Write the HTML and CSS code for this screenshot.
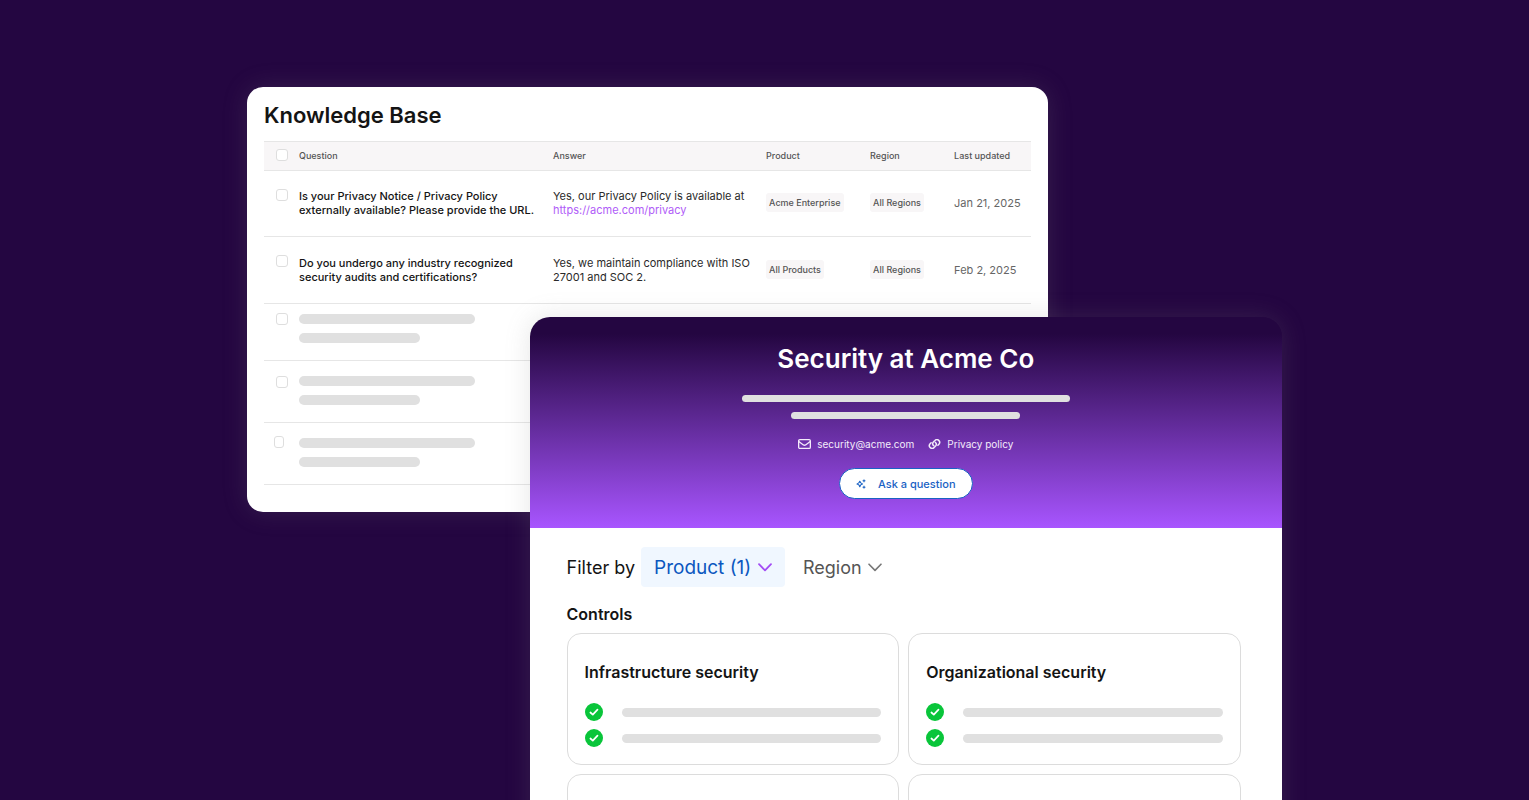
FILE: index.html
```html
<!DOCTYPE html>
<html lang="en">
<head>
<meta charset="utf-8">
<meta name="viewport" content="width=device-width, initial-scale=1">
<title>Knowledge Base and Security at Acme Co</title>
<link rel="stylesheet" href="styles.css">
</head>
<body>
<main class="stage">
  <section class="panel kb">
    <h1 class="kb-title">Knowledge Base</h1>
    <table class="kb-table">
      <colgroup>
        <col class="col-check"><col class="col-question"><col class="col-answer"><col class="col-product"><col class="col-region"><col class="col-updated">
      </colgroup>
      <thead>
        <tr>
          <th><input class="check" type="checkbox" aria-label="Select all"></th>
          <th>Question</th><th>Answer</th><th>Product</th><th>Region</th><th>Last updated</th>
        </tr>
      </thead>
      <tbody>
        <tr class="entry entry-first">
          <td class="pick"><input class="check" type="checkbox" aria-label="Select privacy question"></td>
          <td class="question">Is your Privacy Notice / Privacy Policy<br>externally available? Please provide the URL.</td>
          <td class="answer">Yes, our Privacy Policy is available at <a href="#privacy">https://acme.com/privacy</a></td>
          <td class="tag-cell"><span class="tag">Acme Enterprise</span></td>
          <td class="tag-cell"><span class="tag">All Regions</span></td>
          <td class="date">Jan 21, 2025</td>
        </tr>
        <tr class="entry">
          <td class="pick"><input class="check" type="checkbox" aria-label="Select audits question"></td>
          <td class="question">Do you undergo any industry recognized<br>security audits and certifications?</td>
          <td class="answer">Yes, we maintain compliance with ISO 27001 and SOC 2.</td>
          <td class="tag-cell"><span class="tag">All Products</span></td>
          <td class="tag-cell"><span class="tag">All Regions</span></td>
          <td class="date">Feb 2, 2025</td>
        </tr>
        <tr class="blank blank-first">
          <td><input class="check" type="checkbox" aria-label="Select row 3"></td>
          <td colspan="5"><div class="bar bar-long"></div><div class="bar bar-short"></div></td>
        </tr>
        <tr class="blank">
          <td><input class="check" type="checkbox" aria-label="Select row 4"></td>
          <td colspan="5"><div class="bar bar-long"></div><div class="bar bar-short"></div></td>
        </tr>
        <tr class="blank blank-last">
          <td><input class="check check-narrow" type="checkbox" aria-label="Select row 5"></td>
          <td colspan="5"><div class="bar bar-long"></div><div class="bar bar-short"></div></td>
        </tr>
      </tbody>
    </table>
  </section>

  <section class="panel portal">
    <header class="hero">
      <h2 class="hero-title">Security at Acme Co</h2>
      <div class="hero-bar hero-bar-long"></div>
      <div class="hero-bar hero-bar-short"></div>
      <nav class="hero-links">
        <a href="#mail">
          <svg width="13" height="10" viewBox="0 0 13 10" fill="none" stroke="currentColor" stroke-width="1.3" stroke-linejoin="round"><rect x=".65" y=".65" width="11.7" height="8.7" rx="1.2"/><path d="M.8 2.5 5.4 5.9Q6.5 6.6 7.6 5.9L12.2 2.5"/></svg>
          security@acme.com
        </a>
        <a href="#policy">
          <svg width="13" height="10" viewBox="0 0 13 10" fill="none" stroke="currentColor" stroke-width="1.5" stroke-linecap="round"><path d="M5.7 6.7A2.3 2.3 0 0 1 5.2 3.3L6.9 1.6A2.6 2.6 0 0 1 10.9 5.2L9.9 6.2"/><path d="M7.3 3.3A2.3 2.3 0 0 1 7.8 6.7L6.1 8.4A2.6 2.6 0 0 1 2.1 4.8L3.1 3.8"/></svg>
          Privacy policy
        </a>
      </nav>
      <button class="ask" type="button">
        <svg width="10" height="10" viewBox="0 0 10 10" fill="none" stroke="currentColor" stroke-width="1.1"><path d="M3.8 2.2Q4.2 4.6 6.6 5 4.2 5.4 3.8 7.8 3.4 5.4 1 5 3.4 4.6 3.8 2.2Z" stroke-linejoin="round"/><path d="M8 .4v2.8M6.6 1.8h2.8M8 6.8v2.8M6.6 8.2h2.8"/></svg>
        Ask a question
      </button>
    </header>
    <div class="content">
      <div class="filters">
        <span class="filter-label">Filter by</span>
        <div class="filter filter-active">
          <select aria-label="Product"><option>Product (1)</option></select>
          <svg class="chevron" width="14" height="9" viewBox="0 0 14 9" fill="none" stroke="currentColor" stroke-width="1.8" stroke-linecap="round" stroke-linejoin="round"><path d="M1 1.2 7 7.4 13 1.2"/></svg>
        </div>
        <div class="filter">
          <select aria-label="Region"><option>Region</option></select>
          <svg class="chevron" width="14" height="9" viewBox="0 0 14 9" fill="none" stroke="currentColor" stroke-width="1.6" stroke-linecap="round" stroke-linejoin="round"><path d="M1 1.2 7 7.4 13 1.2"/></svg>
        </div>
      </div>
      <h3 class="controls-title">Controls</h3>
      <div class="cards">
        <article class="card">
          <h4>Infrastructure security</h4>
          <ul>
            <li><svg class="tick" viewBox="0 0 18 18"><circle cx="9" cy="9" r="9"/><path d="M5.4 9.5 7.8 11.7 12.5 6.7"/></svg><span class="line"></span></li>
            <li><svg class="tick" viewBox="0 0 18 18"><circle cx="9" cy="9" r="9"/><path d="M5.4 9.5 7.8 11.7 12.5 6.7"/></svg><span class="line"></span></li>
          </ul>
        </article>
        <article class="card">
          <h4>Organizational security</h4>
          <ul>
            <li><svg class="tick" viewBox="0 0 18 18"><circle cx="9" cy="9" r="9"/><path d="M5.4 9.5 7.8 11.7 12.5 6.7"/></svg><span class="line"></span></li>
            <li><svg class="tick" viewBox="0 0 18 18"><circle cx="9" cy="9" r="9"/><path d="M5.4 9.5 7.8 11.7 12.5 6.7"/></svg><span class="line"></span></li>
          </ul>
        </article>
        <article class="card card-empty"></article>
        <article class="card card-empty"></article>
      </div>
    </div>
  </section>
</main>
</body>
</html>
```
FILE: styles.css
```css
* { box-sizing: border-box; }

body {
  margin: 0;
  background: #240641;
  color: #141414;
  font-family: Inter, "Liberation Sans", sans-serif;
}

h1, h2, h3, h4, ul { margin: 0; padding: 0; }

/* Two overlapping windows share one grid cell. */
.stage {
  display: grid;
  grid-template-columns: minmax(0, 1035px);
  justify-content: center;
  align-items: start;
  height: 100vh;
  padding-top: 87px;
  overflow: hidden;
}

.panel {
  grid-area: 1 / 1;
  box-shadow: 0 0 26px rgba(128, 128, 128, 0.2);
}

.kb {
  width: 77.4%;
  padding: 14px 17px 27px;
  background: #fff;
  border-radius: 16px;
}

.kb-title {
  margin-bottom: 12px;
  font-size: 22px;
  font-weight: 600;
  line-height: 28px;
}

.kb-table {
  width: 100%;
  table-layout: fixed;
  border-collapse: collapse;
}

.col-check { width: 35px; }
.col-question { width: 254px; }
.col-product { width: 104px; }
.col-region { width: 84px; }
.col-updated { width: 77px; }

.kb-table th,
.kb-table td {
  padding: 0;
  text-align: left;
  border-bottom: 1px solid #e6e6e6;
}

.kb-table th {
  height: 29px;
  padding-bottom: 2px;
  background: #f8f6f7;
  border-top: 1px solid #e6e6e6;
  color: #555;
  font-size: 9px;
  font-weight: 500;
  white-space: nowrap;
}

.check {
  appearance: none;
  display: block;
  width: 12px;
  height: 12px;
  margin: 0 0 0 12px;
  background: #fff;
  border: 1px solid #dedede;
  border-radius: 3px;
}

.check-narrow { width: 10px; margin-left: 10px; }

.entry td { height: 67px; }
.entry-first td { height: 66px; padding-bottom: 2px; }
.entry .pick { padding-top: 18px; vertical-align: top; }
.entry .tag-cell { padding-bottom: 4px; }

.question {
  font-size: 11px;
  font-weight: 500;
  line-height: 14px;
  white-space: nowrap;
}

.kb-table .answer {
  padding-right: 10px;
  color: #2a2a2a;
  font-size: 11px;
  line-height: 14px;
}

.answer a { color: #b05cf8; text-decoration: none; }

.tag {
  display: inline-block;
  padding: 0 3px;
  background: #f8f6f7;
  border-radius: 3px;
  color: #555;
  font-size: 9px;
  font-weight: 500;
  line-height: 19px;
  vertical-align: middle;
  white-space: nowrap;
}

.date { color: #666; font-size: 11px; white-space: nowrap; }

.blank td { height: 62px; padding-top: 15px; vertical-align: top; }
.blank-first td { height: 57px; padding-top: 10px; }
.blank-first td:first-child { padding-top: 9px; }
.blank-last td:first-child { padding-top: 13px; }

.bar { height: 10px; background: #e0e0e0; border-radius: 5px; }
.bar-long { width: 176px; margin-bottom: 9px; }
.bar-short { width: 121px; }

.portal {
  justify-self: end;
  width: 72.7%;
  margin-top: 230px;
  border-radius: 20px 20px 0 0;
}

.hero {
  display: flex;
  flex-direction: column;
  align-items: center;
  padding: 24px 20px 29px;
  border-radius: 20px 20px 0 0;
  background: linear-gradient(#240641 8%, #a855ff);
  color: #fff;
}

.hero-title {
  margin-bottom: 18px;
  font-size: 26px;
  font-weight: 600;
  line-height: 36px;
}

.hero-bar { height: 7px; margin-bottom: 10px; background: #e0e0e0; border-radius: 4px; }
.hero-bar-long { width: 328px; }
.hero-bar-short { width: 229px; margin-bottom: 17px; }

.hero-links { display: flex; gap: 14px; margin-bottom: 16px; }

.hero-links a {
  display: flex;
  align-items: center;
  gap: 6px;
  color: #f4ecfb;
  font-size: 10px;
  line-height: 16px;
  text-decoration: none;
}

.ask {
  display: flex;
  align-items: center;
  gap: 12px;
  height: 31px;
  padding: 0 16px;
  background: #fff;
  border: 1px solid #1a62c4;
  border-radius: 16px;
  color: #1a62c4;
  font: 500 11px Inter, sans-serif;
}

.content { padding: 19px 41px 0 37px; background: #fff; }

.filters { display: flex; align-items: center; gap: 5px; }
.filter-label { margin-right: 1px; font-size: 18px; }

.filter { position: relative; color: #777; }

.filter select {
  appearance: none;
  height: 40px;
  padding: 0 33px 0 13px;
  background: transparent;
  border: 0;
  border-radius: 4px;
  color: #555;
  font: 400 18px Inter, sans-serif;
}

.filter-active { color: #a34df5; }
.filter-active select { background: #f0f7ff; color: #0b57c0; font-size: 19px; }

.chevron { position: absolute; top: 16px; right: 13px; pointer-events: none; }

.controls-title { margin: 17px 0 9px; font-size: 16px; font-weight: 600; line-height: 20px; }

.cards { display: grid; grid-template-columns: 1fr 1fr; gap: 9px; }

.card {
  padding: 28px 17px 17px;
  border: 1px solid #dcdcdc;
  border-radius: 14px;
}

.card-empty { height: 131px; }

.card h4 { margin-bottom: 21px; font-size: 16px; font-weight: 600; line-height: 20px; }

.card ul { display: grid; gap: 8px; list-style: none; }
.card li { display: flex; align-items: center; gap: 19px; }

.tick { flex: none; width: 18px; height: 18px; }
.tick circle { fill: #09c53a; }
.tick path { fill: none; stroke: #fff; stroke-width: 1.7; stroke-linecap: round; stroke-linejoin: round; }

.line { flex: 1; height: 9px; background: #e0e0e0; border-radius: 5px; }
```
